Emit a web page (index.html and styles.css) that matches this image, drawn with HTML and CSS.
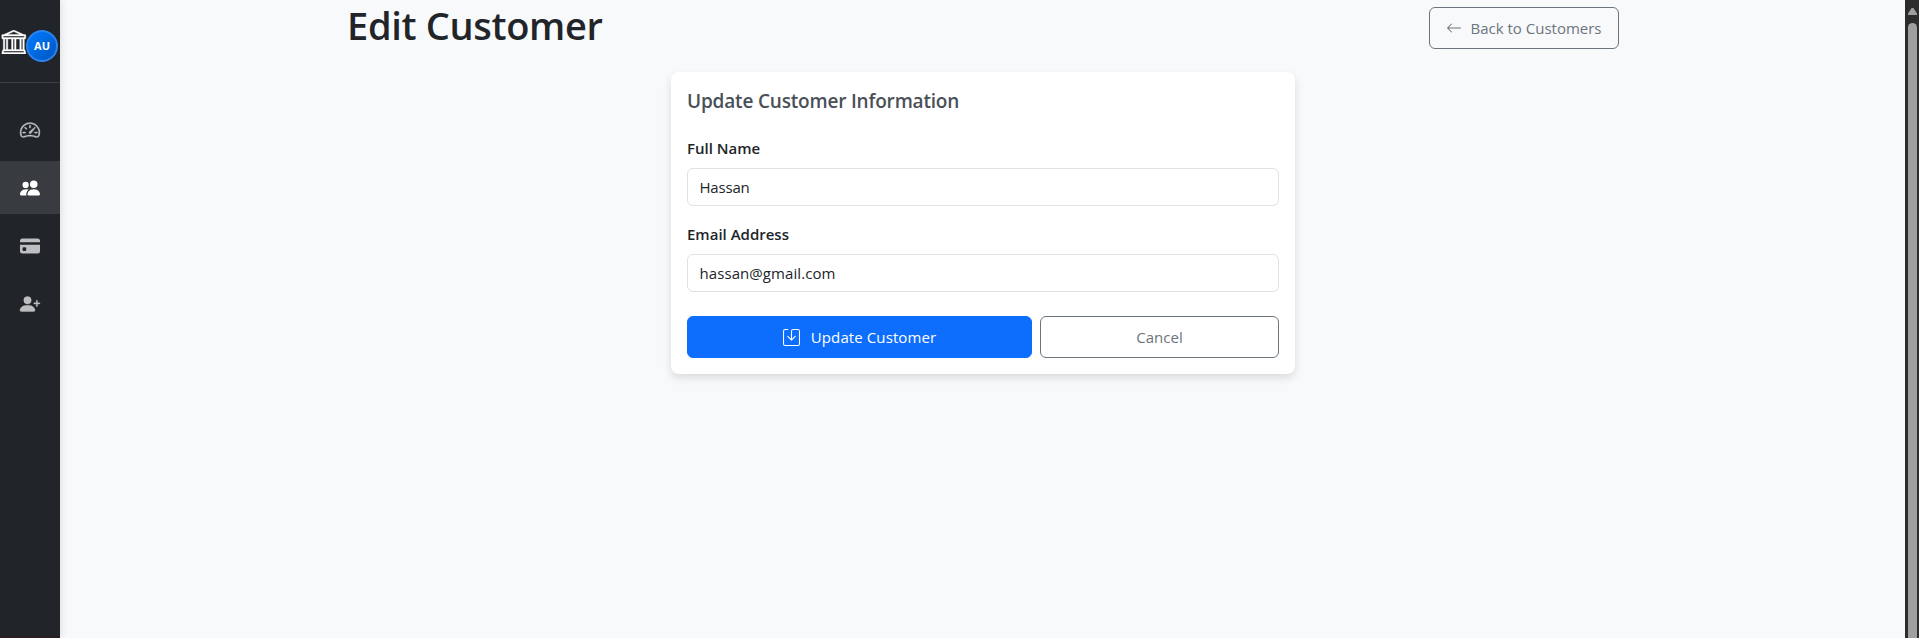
FILE: index.html
```html
<!DOCTYPE html>
<html lang="en">
<head>
<meta charset="utf-8">
<title>Edit Customer</title>
<link rel="stylesheet" href="styles.css">
</head>
<body>
<div class="app">
  <aside class="sidebar">
    <div class="brand">
      <svg class="bank" viewBox="0 0 16 16" fill="currentColor"><path d="m8 0 6.61 3h.89a.5.5 0 0 1 .5.5v2a.5.5 0 0 1-.5.5H15v7a.5.5 0 0 1 .485.38l.5 2a.498.498 0 0 1-.485.62H.5a.498.498 0 0 1-.485-.62l.5-2A.5.5 0 0 1 1 13V6H.5a.5.5 0 0 1-.5-.5v-2A.5.5 0 0 1 .5 3h.89zM3.777 3h8.447L8 1zM2 6v7h1V6zm2 0v7h2.500V6zm3.500 0v7h1V6zm2 0v7H12V6zM13 6v7h1V6zm2-1V4H1v1zm-.39 9H1.390l-.25 1h13.720z"/></svg>
      <span class="avatar">AU</span>
    </div>
    <nav class="nav">
      <a class="nav-item"><svg class="icon-gauge" viewBox="0 0 16 16" fill="currentColor"><path d="M8 4a.5.5 0 0 1 .5.5V6a.5.5 0 0 1-1 0V4.500A.5.5 0 0 1 8 4M3.732 5.732a.5.5 0 0 1 .707 0l.915.914a.5.5 0 1 1-.708.708l-.914-.915a.5.5 0 0 1 0-.707M2 10a.5.5 0 0 1 .5-.5h1.586a.5.5 0 0 1 0 1H2.500A.5.5 0 0 1 2 10m9.500 0a.5.5 0 0 1 .5-.5h1.500a.5.5 0 0 1 0 1H12a.5.5 0 0 1-.5-.5m.754-4.246a.39.39 0 0 0-.527-.02L7.547 9.310a.91.91 0 1 0 1.302 1.258l3.434-4.297a.39.39 0 0 0-.029-.518z"/><path fill-rule="evenodd" d="M0 10a8 8 0 1 1 15.547 2.661c-.442 1.253-1.845 1.602-2.932 1.250C11.309 13.488 9.475 13 8 13c-1.474 0-3.310.488-4.615.911-1.087.352-2.490.003-2.932-1.250A8 8 0 0 1 0 10m8-7a7 7 0 0 0-6.603 9.329c.203.575.923.876 1.680.63C4.397 12.533 6.358 12 8 12s3.604.532 4.923.960c.757.245 1.477-.056 1.680-.631A7 7 0 0 0 8 3"/></svg></a>
      <a class="nav-item active"><svg viewBox="0 0 16 16" fill="currentColor"><path d="M7 14s-1 0-1-1 1-4 5-4 5 3 5 4-1 1-1 1zm4-6a3 3 0 1 0 0-6 3 3 0 0 0 0 6m-5.784 6A2.240 2.240 0 0 1 5 13c0-1.355.680-2.750 1.936-3.720A6.300 6.300 0 0 0 5 9c-4 0-5 3-5 4s1 1 1 1zM4.500 8a2.500 2.500 0 1 0 0-5 2.500 2.500 0 0 0 0 5"/></svg></a>
      <a class="nav-item"><svg viewBox="0 0 16 16" fill="currentColor"><path d="M0 4a2 2 0 0 1 2-2h12a2 2 0 0 1 2 2v1H0zm0 3v5a2 2 0 0 0 2 2h12a2 2 0 0 0 2-2V7zm3 2h1a1 1 0 0 1 1 1v1a1 1 0 0 1-1 1H3a1 1 0 0 1-1-1v-1a1 1 0 0 1 1-1"/></svg></a>
      <a class="nav-item"><svg class="icon-plus" viewBox="0 0 16 16" fill="currentColor"><path d="M1 14s-1 0-1-1 1-4 6-4 6 3 6 4-1 1-1 1zm5-6a3 3 0 1 0 0-6 3 3 0 0 0 0 6"/><path fill-rule="evenodd" d="M13.500 5a.5.5 0 0 1 .5.5V7h1.500a.5.5 0 0 1 0 1H14v1.500a.5.5 0 0 1-1 0V8h-1.500a.5.5 0 0 1 0-1H13V5.500a.5.5 0 0 1 .5-.5"/></svg></a>
    </nav>
  </aside>
  <main class="content">
    <header class="page-head">
      <h1 class="title">Edit Customer</h1>
      <a class="btn btn-outline btn-back"><svg class="icon-back" viewBox="0 0 16 16" fill="currentColor"><path fill-rule="evenodd" d="M15 8a.5.5 0 0 0-.5-.5H2.707l3.147-3.146a.5.5 0 1 0-.708-.708l-4 4a.5.5 0 0 0 0 .708l4 4a.5.5 0 0 0 .708-.708L2.707 8.500H14.500A.5.5 0 0 0 15 8"/></svg><span>Back to Customers</span></a>
    </header>
    <form class="card">
      <h2 class="card-title">Update Customer Information</h2>
      <label class="label" for="name">Full Name</label>
      <input class="input i-name" id="name" type="text" value="Hassan">
      <label class="label" for="email">Email Address</label>
      <input class="input i-email" id="email" type="text" value="hassan@gmail.com">
      <div class="actions">
        <button class="btn btn-primary" type="button"><svg class="icon-save" viewBox="0 0 16 16" fill="currentColor"><path d="M2 1a1 1 0 0 0-1 1v12a1 1 0 0 0 1 1h12a1 1 0 0 0 1-1V2a1 1 0 0 0-1-1H9.500a1 1 0 0 0-1 1v7.293l2.646-2.647a.5.5 0 0 1 .708.708l-3.500 3.500a.5.5 0 0 1-.708 0l-3.500-3.500a.5.5 0 1 1 .708-.708L7.500 9.293V2a2 2 0 0 1 2-2H14a2 2 0 0 1 2 2v12a2 2 0 0 1-2 2H2a2 2 0 0 1-2-2V2a2 2 0 0 1 2-2h2.500a.5.5 0 0 1 0 1z"/></svg><span class="t-update">Update Customer</span></button>
        <button class="btn btn-outline" type="button">Cancel</button>
      </div>
    </form>
  </main>
  <div class="scrollbar"><span class="arrow-up"></span><span class="thumb"></span></div>
</div>
</body>
</html>
```
FILE: styles.css
```css
* { box-sizing: border-box; }
body {
  margin: 0;
  background: #f8f9fb;
  color: #212529;
  font: 15px/24px "Open Sans", "Noto Sans", sans-serif;
}
.app { display: flex; height: 638px; overflow: hidden; }

.sidebar {
  flex: 0 0 60px;
  background: #212529;
  border-bottom: 2px solid #2a1c23;
  box-shadow: 0 0 8px rgba(0, 0, 0, .15);
  z-index: 1;
}
.brand {
  display: flex;
  height: 83px;
  padding: 30px 0 0 1px;
  border-bottom: 1px solid #3b3f43;
  color: #fff;
}
.bank {
  flex: none;
  width: 25.600px;
  height: 24px;
  stroke: currentColor;
  stroke-width: .25;
}
.avatar {
  flex: none;
  width: 32px;
  height: 32px;
  margin-left: -.6px;
  border: 2px solid #2b84f0;
  border-radius: 50%;
  background: linear-gradient(135deg, #007bff, #0056c0);
  font-size: 11px;
  font-weight: 700;
  line-height: 28px;
  text-align: center;
}
.nav { display: flex; flex-direction: column; gap: 5px; padding-top: 20px; }
.nav-item {
  display: flex;
  align-items: center;
  justify-content: center;
  height: 53px;
  color: #bcbebf;
}
.nav-item svg { width: 20px; height: 20px; }
.nav-item .icon-gauge,
.nav-item .icon-plus { overflow: visible; stroke: currentColor; stroke-width: .3; }
.nav-item.active { background: #383b3f; color: #fff; }

.content { flex: 1; padding: 7px 286px 0 287px; }
.page-head { display: flex; justify-content: space-between; height: 65px; }
.title {
  margin: -6px 0 0;
  font-size: 38px;
  font-weight: 600;
  line-height: 48px;
  letter-spacing: -.33px;
}
.btn {
  display: flex;
  align-items: center;
  justify-content: center;
  height: 42px;
  padding: 0;
  border: 1px solid #6c757d;
  border-radius: 6px;
  background: transparent;
  color: #6c757d;
  font: inherit;
  white-space: nowrap;
}
.btn-back { width: 190px; gap: 8px; }
.icon-back { width: 16px; height: 16px; }

.card {
  width: 624px;
  height: 302px;
  margin-left: 324px;
  padding: 17px 16px 16px;
  border-radius: 8px;
  background: #fff;
  box-shadow: 0 4px 8px rgba(0, 0, 0, .12);
}
.card-title {
  margin: 0 0 23px;
  color: #495057;
  font-size: 19px;
  font-weight: 600;
  line-height: 24px;
  letter-spacing: -.18px;
}
.label { display: block; height: 32px; font-weight: 600; }
.input {
  display: block;
  width: 100%;
  height: 38px;
  margin-bottom: 16px;
  padding: 0 11.500px;
  border: 1px solid #dee2e6;
  border-radius: 6px;
  background: #fff;
  color: #212529;
  font: inherit;
}
.i-name { letter-spacing: -.2px; }
.i-email { letter-spacing: .08px; }
.actions { display: grid; grid-template-columns: 345px 239px; gap: 8px; padding-top: 8px; }
.btn-primary { border-color: #0d6efd; background: #0d6efd; color: #fff; gap: 11px; }
.icon-save { width: 17px; height: 17px; }
.t-update { letter-spacing: .1px; }

.scrollbar {
  display: flex;
  flex: 0 0 14px;
  flex-direction: column;
  align-items: center;
  padding: 8px 2px 0 3px;
  background: #2c2c2c;
}
.arrow-up {
  flex: none;
  width: 9px;
  height: 7px;
  background: #9f9f9f;
  clip-path: polygon(40% 0, 60% 0, 100% 80%, 100% 100%, 0 100%, 0 80%);
}
.thumb { width: 9px; height: 640px; flex: none; margin-top: 8px; border-radius: 5px; background: #9f9f9f; }
```
